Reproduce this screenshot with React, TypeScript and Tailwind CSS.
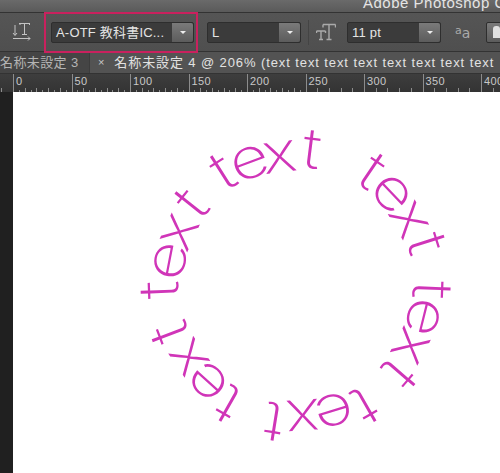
const ring: [number, number, string][] = [
  [158, 290, "t"], [165, 260, "e"], [175, 230, "x"], [190, 202, "t"],
  [222, 170, "t"], [248, 158, "e"], [279, 152, "x"], [312, 148, "t"],
  [373, 170, "t"], [395, 190, "e"], [413, 217, "x"], [428, 243, "t"],
  [433, 290, "t"], [428, 318, "e"], [415, 348, "x"], [400, 375, "t"],
  [365, 407, "t"], [335, 415, "e"], [303, 420, "x"], [273, 423, "t"],
  [227, 405, "t"], [205, 385, "e"], [185, 360, "x"], [168, 333, "t"],
];
const cx = 295;
const cy = 285;
const rulerLabels = ["0", "50", "100", "150", "200", "250", "300", "350", "400"];

function Select({ label, w, mr }: { label: string; w: string; mr?: string }) {
  return (
    <div className={`flex h-[21px] shrink-0 items-center rounded-[2px] border border-[#2e2e2e] bg-[#3b3b3b] ${w} ${mr ?? ""}`}>
      <span className="flex-1 truncate pl-[4px] text-[13px] leading-none tracking-[0.2px] text-[#e4e4e4]">{label}</span>
      <span className="flex h-full w-[21px] shrink-0 items-center justify-center rounded-r-[2px] bg-gradient-to-b from-[#7a7a7a] to-[#5c5c5c]">
        <span className="h-0 w-0 border-x-[3px] border-t-[3px] border-x-transparent border-t-[#eeeeee]" />
      </span>
    </div>
  );
}

export default function App() {
  return (
    <div className="relative flex h-[473px] w-[500px] flex-col overflow-hidden bg-white font-['Liberation_Sans','Noto_Sans_CJK_JP',sans-serif]">
      <div className="flex h-[13px] shrink-0 items-start overflow-hidden border-b border-[#333] bg-gradient-to-b from-[#6a6a6a] to-[#5a5a5a] pl-[363px]">
        <span className="-mt-[5px] whitespace-nowrap text-[15px] leading-[15px] tracking-[0.5px] text-[#e4e4e4]">Adobe Photoshop C</span>
      </div>

      <div className="flex h-[39px] shrink-0 items-center overflow-hidden border-b border-[#333] bg-gradient-to-b from-[#555555] to-[#4f4f4f] pl-[12px]">
        <svg width="20" height="20" viewBox="0 0 20 20" className="mr-[19px] shrink-0" fill="none" stroke="#c4c4c4" strokeWidth="1">
          <path d="M7 1.500h11M12.500 1.500v11M10 12.500h5M8 1.500v1.500M17.500 1.500v1.500M3 3v10M1 11l2 2.500L5 11M1 16.500h17M16 14.500l2 2-2 2" />
        </svg>
        <Select label="A-OTF 教科書IC..." w="w-[143px]" mr="mr-[13px]" />
        <Select label="L" w="w-[94px]" mr="mr-[7px]" />
        <div className="mr-[7px] h-[25px] w-px shrink-0 bg-[#444]" />
        <svg width="20" height="20" viewBox="0 0 20 20" className="mr-[11px] shrink-0" fill="none" stroke="#aaaaaa" strokeWidth="1.4">
          <path d="M7 2.500h12.500M13 2.500v15M10.500 17.500h5M7 2.500v3M19.500 2.500v3M0.500 9h9M5 9v8.500M3 17.500h4M0.500 9v2M9.500 9v2" />
        </svg>
        <Select label="11 pt" w="w-[94px]" mr="mr-[14px]" />
        <span className="mr-[15px] flex w-[16px] shrink-0 items-end font-['DejaVu_Sans',sans-serif] leading-none text-[#aaaaaa]">
          <span className="mb-[4px] text-[11px]">a</span>
          <span className="text-[14px]">a</span>
        </span>
        <div className="flex h-[21px] w-[30px] shrink-0 items-center rounded-l-[2px] border border-[#2e2e2e] bg-gradient-to-b from-[#7a7a7a] to-[#5c5c5c] pl-[6px]">
          <div className="h-[12px] w-[7px] rounded-t-[3px] bg-[#e0e0e0]" />
        </div>
      </div>

      <div className="flex h-[22px] shrink-0 items-center overflow-hidden border-b border-[#333] bg-[#535353] text-[13px] leading-none tracking-[0.9px] text-[#e2e2e2]">
        <div className="flex h-full w-[90px] shrink-0 items-center whitespace-nowrap border-r border-[#3c3c3c] bg-[#454545] tracking-[0.4px] text-[#b4b4b4]">名称未設定 3</div>
        <span className="ml-[8px] mr-[9px] shrink-0 text-[11px] text-[#c8c8c8]">×</span>
        <span className="whitespace-nowrap">名称未設定 4 @ 206% (text text text text text text text text</span>
      </div>

      <div className="relative h-[18px] shrink-0 overflow-hidden bg-gradient-to-b from-[#3e3e3e] to-[#333333] text-[11px] leading-none tracking-[0.4px] text-[#c8c8c8]">
        <div className="flex pl-[13px] pt-[2px]">
          {rulerLabels.map((l) => (
            <span key={l} className="w-[58.5px] shrink-0 pl-[3px]">{l}</span>
          ))}
        </div>
        <svg className="absolute inset-0" width="500" height="18" fill="none" stroke="#8c8c8c" strokeWidth="1">
          {Array.from({ length: 50 }).map((_, i) => {
            const x = Math.round(13 - 58.5 / 5 + (i * 58.5) / 5) + 0.5;
            const major = (i - 1) % 5 === 0;
            return <path key={i} d={`M${x} ${major ? 0 : 14}V18`} />;
          })}
          {Array.from({ length: 50 }).map((_, i) => {
            const x = Math.round(13 + (i * 58.5) / 10) + 0.5;
            return <path key={i} d={`M${x} 16V18`} />;
          })}
        </svg>
      </div>

      <div className="flex min-h-0 flex-1">
        <div className="w-[13px] shrink-0 bg-[#202020]" />
        <div className="flex-1 bg-white" />
      </div>

      <svg className="absolute left-0 top-0" width="500" height="473" aria-label="text on a circle">
        {ring.map(([x, y, c], i) => {
          const deg = (Math.atan2(x - cx, cy - y) * 180) / Math.PI;
          return (
            <text
              key={i}
              transform={`translate(${x} ${y}) rotate(${deg}) scale(1.2 1)`}
              textAnchor="middle"
              dominantBaseline="central"
              fill="#d035b8"
              fontFamily="Inter, sans-serif"
              fontWeight="175"
              fontSize="56"
            >
              {c}
            </text>
          );
        })}
      </svg>

      <div className="absolute left-[44px] top-[12px] h-[41px] w-[154px] border-2 border-[#c9215e]" />
    </div>
  );
}
